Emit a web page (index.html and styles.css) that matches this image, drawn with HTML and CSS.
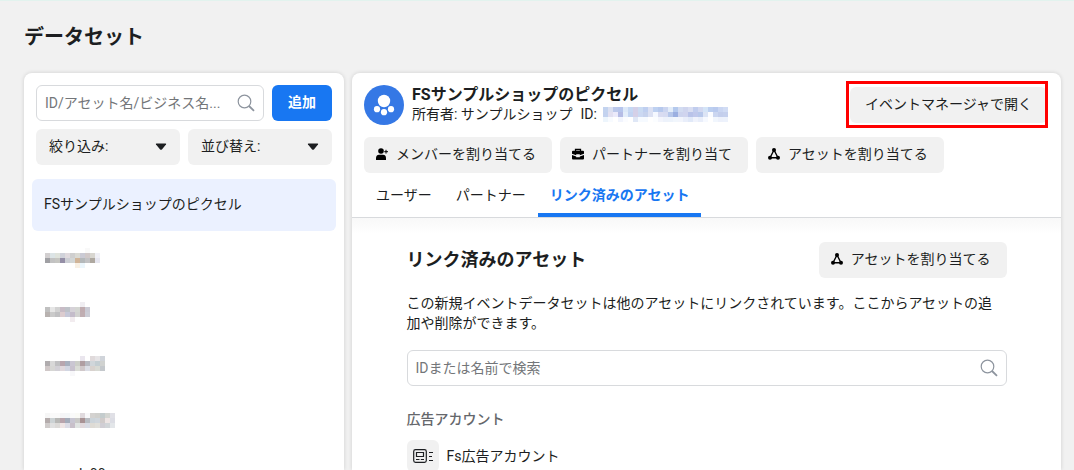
FILE: index.html
```html
<!DOCTYPE html>
<html lang="ja">
<head>
<meta charset="utf-8">
<title>データセット</title>
<link rel="stylesheet" href="styles.css">
</head>
<body>
<svg class="defs" aria-hidden="true">
  <symbol id="search" viewBox="0 0 18 18"><circle cx="7.5" cy="7.5" r="6.3" fill="none" stroke="currentColor" stroke-width="1.2"/><path d="M12 12l5 4.8" stroke="currentColor" stroke-width="1.8"/></symbol>
  <symbol id="caret" viewBox="0 0 12 8"><path d="M1.6.5h8.8q1.2.1.6 1L6.9 6.4q-.9.9-1.8 0L1 1.500q-.6-.9.6-1z" fill="currentColor"/></symbol>
  <symbol id="asset" viewBox="0 0 12 12"><path d="M6 2L2 9.800h8z" fill="none" stroke="currentColor" stroke-width="1.400"/><circle cx="6" cy="2" r="2"/><circle cx="2" cy="9.800" r="2"/><circle cx="10" cy="9.800" r="2"/></symbol>
  <symbol id="member" viewBox="0 0 12 12"><circle cx="5" cy="3" r="2.800"/><path d="M0 12V9.800Q.4 6.800 3 6.800h4q2.800 0 3 3V12z"/><path d="M10 1.800v3.800M8.200 3.700H12" stroke="currentColor" stroke-width="1"/></symbol>
  <symbol id="case" viewBox="0 0 12 12"><path d="M3.500 3V1.500h5V3" fill="none" stroke="currentColor" stroke-width="1.300"/><path d="M1 2.800h10q1 0 1 1v2L7.800 7.200V6.300H4.200v.9L0 5.800v-2q0-1 1-1zM0 7l4.200 1.400v.8h3.600v-.8L12 7v3.500q0 1-1 1H1q-1 0-1-1z"/></symbol>
</svg>
<main class="page">
  <h1 class="page-title">データセット</h1>
  <div class="columns">
    <aside class="panel sidebar">
      <div class="controls">
        <label class="field"><input type="text" aria-label="データセットを検索" placeholder="ID/アセット名/ビジネス名..."><svg class="search-icon"><use href="#search"/></svg></label>
        <button class="button primary" type="button">追加</button>
      </div>
      <div class="filters">
        <label class="picker"><select aria-label="絞り込み"><option>絞り込み:</option></select><svg class="caret"><use href="#caret"/></svg></label>
        <label class="picker"><select aria-label="並び替え"><option>並び替え:</option></select><svg class="caret"><use href="#caret"/></svg></label>
      </div>
      <ul class="datasets">
        <li class="dataset selected">FSサンプルショップのピクセル</li>
        <li class="dataset"><svg class="mosaic" data-rows="........ f9f9f9/d2cfd0 dce4e6 dfe3dc d0d2da e0dade cfcfcf dadad4 cacad4 d0c8c8 d8d6d0 f0f0f6/a0a0a4 c2c2c2 c6c6c2 948ea6 ccced4 d2d6d6 d0b498 b4b8ba c2c2c4 aea8a0 e6e6f0/...... f8f0e4 ecf6fc"></svg></li>
        <li class="dataset"><svg class="mosaic" data-rows="....... f0eef2/c0c0c0 e6e6e6 d2d2d2 c8bcc6 bec2c8 d6d2d8 d4d6d2 c0acb0 cacad4/b8b2b0 cacaca c0c0c2 dccccf c6c8d8 c4bcca d2d2d0 c0aeb2 cccdd6/..... f2ecef"></svg></li>
        <li class="dataset"><svg class="mosaic" data-rows="....... eae6ee . e0dadb e6e4e6 d0d4da/b0acae d8d8d8 c0c0c2 b8a6ae a8b0be cac6d2 cccec8 b09ea2 b8bac2 d0d6da c4ced2 d0d2d0/d0c8c8 d6d6d4 d2d0d6 e0d8dc d2d6e2 c8c2ce dadcd6 d0c8ca dcdee6 d8d2ce d8dad4 c4c8cc/..... f8f8fa"></svg></li>
        <li class="dataset"><svg class="mosaic" data-rows="f6f6f6 fafafa fafafa f5f5f7 f4f6f8 fafafa fafaf6 e0dade f8f8fa d4d2d0 d0d0cd c4cccd d4d6d2 e0e0e6/b4acac ccd2d4 b8b8b6 b8a4ac a4acba c8c6d2 cacac8 a89294 b8bcc2 ccd4da d0d6dc d0cbca ede5e4 dcdde4/d0cccb e0e0e0 dcdad8 eee4e4 dcdce6 c8c0ca e0e4e2 e0d8dc d8dbe4 dedbd5 e0dfda d0ced4 d1d5d8 e3e6e9"></svg></li>
        <li class="dataset">sample00</li>
      </ul>
    </aside>
    <section class="panel detail">
      <header class="detail-header">
        <div class="summary">
          <svg class="avatar" viewBox="0 0 40 40"><circle cx="20" cy="20" r="20" fill="#3578e5"/><g fill="#fff"><circle cx="20" cy="16" r="6.200"/><circle cx="13" cy="24.200" r="3.100"/><circle cx="27" cy="24.200" r="3.100"/><circle cx="20" cy="27.200" r="3.100"/></g></svg>
          <div class="identity">
            <h2 class="name">FSサンプルショップのピクセル</h2>
            <p class="meta"><span>所有者: サンプルショップ</span><span>ID:</span><svg class="mosaic" data-rows="c3d3ef dbe0f1 bbc8ea b6c5ec dce8f8 c6d8f3 d3d0e8 cadbf2 bfcff0 dce1f3 bed1f1 b7c9ed cbd5f0 e3edf9 b4c9ed d3dcf1 cfd5ee d9def2 c1cdee d2d8f0 d4e4f7 bccff0 b9caee cad6f2 d1dcf4/c3d2ef e2e0f1 ebeafa b5bce5 e3edfa c3d4f2 d5d0e7 cbd8f2 c6d2ed dce1f3 f5f8ff d9dcf1 d6dbf1 b6c7ea 9bafe0 cdd4ee d0d4ee b9c3e9 c0c8eb b8c8eb dce4f5 fbfcff cbd6f0 c3ceec c5d0ed/edf5fc f8fbff fff f1f4fd fbfcff fff dfe7f6 f6faff f6faff fff fbfdff f3f5fc edf2fb edf3fb f1f6fc f2f5fc e9eefa e1e9f8 f0f3fc e9eefa f6f9ff fff f1f6fd edf1fb edf2fc"></svg></p>
          </div>
          <div class="highlight"><button class="button" type="button">イベントマネージャで開く</button></div>
        </div>
        <div class="actions">
          <button class="button with-icon" type="button"><svg><use href="#member"/></svg>メンバーを割り当てる</button>
          <button class="button with-icon" type="button"><svg><use href="#case"/></svg>パートナーを割り当て</button>
          <button class="button with-icon" type="button"><svg><use href="#asset"/></svg>アセットを割り当てる</button>
        </div>
        <nav class="tabs" role="tablist">
          <button class="tab" type="button" role="tab" aria-selected="false">ユーザー</button>
          <button class="tab" type="button" role="tab" aria-selected="false">パートナー</button>
          <button class="tab" type="button" role="tab" aria-selected="true">リンク済みのアセット</button>
        </nav>
      </header>
      <div class="content">
        <div class="assets">
          <div class="section-head">
            <h2 class="section-title">リンク済みのアセット</h2>
            <button class="button with-icon" type="button"><svg><use href="#asset"/></svg>アセットを割り当てる</button>
          </div>
          <p class="description">この新規イベントデータセットは他のアセットにリンクされています。ここからアセットの追加や削除ができます。</p>
          <label class="field"><input type="text" aria-label="アセットを検索" placeholder="IDまたは名前で検索"><svg class="search-icon"><use href="#search"/></svg></label>
          <h3 class="group">広告アカウント</h3>
          <div class="asset">
            <span class="asset-icon"><svg viewBox="0 0 20 14" fill="none" stroke="#1c1e21" stroke-width="1.200"><rect x=".7" y=".7" width="12.600" height="12.600" rx="1.800"/><path d="M3.500 3.500h7v4h-7zM3 10.500h3.500M7.800 10.500H11M16 3.500h4M16 7.500h3M16 11.500h4"/></svg></span>
            <span>Fs広告アカウント</span>
          </div>
        </div>
      </div>
    </section>
  </div>
</main>
<script src="mosaic.js"></script>
</body>
</html>
```
FILE: styles.css
```css
* { box-sizing: border-box; }
body {
  margin: 0;
  color: #1c1e21;
  background: #f1f1f1;
  font: 14px/20px Roboto, "Noto Sans CJK JP", sans-serif;
}
h1, h2, h3, p, ul { margin: 0; padding: 0; }
button, input, select { font: inherit; color: inherit; }
.defs { position: absolute; width: 0; height: 0; }
.page {
  display: flex;
  flex-direction: column;
  height: 100vh;
  overflow: hidden;
  padding: 22px 13px 0 24px;
  border-top: 1px solid #e2f3ee;
}
.page-title { font-size: 20px; line-height: 28px; font-weight: 700; margin-bottom: 22px; }
.columns { display: flex; flex: 1; gap: 8px; min-height: 0; }
.panel {
  background: #fff;
  border-radius: 8px 8px 0 0;
  box-shadow: 0 0 4px rgba(0, 0, 0, .14);
}
.sidebar { flex: 0 0 320px; padding: 12px; }
.controls, .filters { display: flex; gap: 8px; }
.filters { margin: 8px 0 14px; }
.field {
  display: flex;
  flex: 1;
  align-items: center;
  gap: 8px;
  min-width: 0;
  height: 36px;
  padding: 0 8px;
  border: 1px solid #d8dadd;
  border-radius: 6px;
  background: #fff;
}
.field input { flex: 1; min-width: 0; padding: 0; border: 0; outline: 0; background: none; }
.field input::placeholder { color: #737679; opacity: 1; }
.search-icon { width: 18px; height: 18px; color: #8d949e; }
.button {
  height: 36px;
  padding: 0 15px 2px;
  border: 0;
  border-radius: 6px;
  background: #f1f1f1;
  white-space: nowrap;
}
.primary { width: 60px; background: #1877f2; color: #fff; font-weight: 700; }
.with-icon { display: flex; align-items: center; gap: 8px; padding: 0 16px 2px 12px; }
.with-icon svg { width: 12px; height: 12px; color: #000; }
.picker { position: relative; flex: 1; }
.picker select {
  width: 100%;
  height: 36px;
  padding: 0 13px 2px;
  border: 0;
  border-radius: 6px;
  background: #f1f1f1;
  appearance: none;
}
.caret { position: absolute; right: 13px; top: 14px; width: 12px; height: 8px; pointer-events: none; }
.datasets { display: flex; flex-direction: column; gap: 2px; margin: 0 -4px; list-style: none; }
.dataset { display: flex; align-items: center; height: 52px; padding: 0 12px 2px; border-radius: 6px; }
.dataset .mosaic { margin-left: 1px; }
.selected { background: #ebf1ff; }
.mosaic { display: block; shape-rendering: crispEdges; }
.detail { flex: 1; display: flex; flex-direction: column; min-width: 0; }
.detail-header { padding: 12px 14px 0 12px; border-bottom: 1px solid #d8dadd; }
.summary { display: flex; gap: 8px; }
.avatar { flex: none; width: 40px; height: 40px; }
.identity { flex: 1; min-width: 0; }
.name { font-size: 16px; line-height: 20px; font-weight: 700; }
.meta { display: flex; align-items: center; gap: 8px; line-height: 18px; white-space: nowrap; }
.meta .mosaic { margin-left: -2px; }
.highlight { position: relative; align-self: flex-start; padding-top: 2px; }
.highlight::after {
  content: "";
  position: absolute;
  inset: -4px -1px -5px -4px;
  border: 3px solid #f00;
  pointer-events: none;
}
.actions { display: flex; gap: 8px; margin-top: 12px; }
.tabs { display: flex; }
.tab { height: 44px; padding: 4px 12px 0; border: 0; border-bottom: 4px solid transparent; background: none; }
.tab[aria-selected="true"] { border-color: #1877f2; color: #1877f2; font-weight: 700; }
.content {
  flex: 1;
  min-height: 0;
  padding: 24px 24px 0;
  background: linear-gradient(#f8f8f8, #fff 16px);
}
.assets { max-width: 600px; margin: 0 auto; }
.section-head { display: flex; align-items: center; justify-content: space-between; }
.section-title { font-size: 18px; line-height: 24px; font-weight: 700; }
.description { margin: 15px 0 17px; padding-right: 8px; }
.group { margin: 23px 0 11px; color: #65676b; font-size: 14px; font-weight: 500; }
.asset { display: flex; align-items: center; gap: 8px; }
.asset-icon { display: flex; align-items: center; justify-content: center; width: 32px; height: 32px; border-radius: 6px; background: #f1f1f1; }
.asset-icon svg { width: 20px; height: 14px; }
```
FILE: mosaic.js
```js
const CELL = 5;
document.querySelectorAll(".mosaic").forEach((svg) => {
  let columns = 0;
  const rows = svg.dataset.rows.split("/");
  rows.forEach((row, y) => {
    let x = 0;
    row.split(" ").forEach((token) => {
      if (token.startsWith(".")) {
        x += token.length;
        return;
      }
      const rect = document.createElementNS("http://www.w3.org/2000/svg", "rect");
      rect.setAttribute("x", x * CELL);
      rect.setAttribute("y", y * CELL);
      rect.setAttribute("width", CELL);
      rect.setAttribute("height", CELL);
      rect.setAttribute("fill", "#" + token);
      svg.append(rect);
      x += 1;
    });
    columns = Math.max(columns, x);
  });
  svg.setAttribute("width", columns * CELL);
  svg.setAttribute("height", rows.length * CELL);
});
```
